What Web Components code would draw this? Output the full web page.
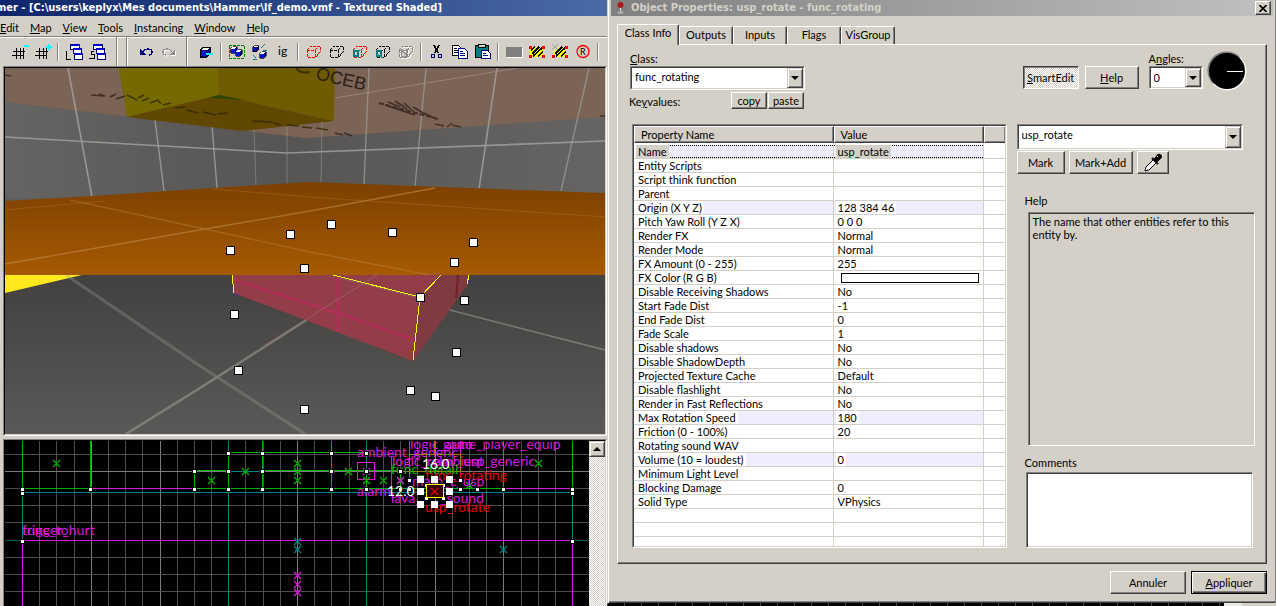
<!DOCTYPE html>
<html lang="en">
<head>
<meta charset="utf-8">
<title>Hammer - Object Properties</title>
<style>
html,body{margin:0;height:100%}
body{background:#000;color:#000;font:11px/14px Lato,"Open Sans",sans-serif;--face:#d4d0c8;--title:bold 11px/16px "DejaVu Sans Condensed","Noto Sans",sans-serif}
</style>
</head>
<body>
<hm-app></hm-app>
<script>
const def=(name,html,after)=>{
  const t=document.createElement('template');
  t.innerHTML='<style>*{box-sizing:border-box}</style>'+html;
  customElements.define(name,class extends HTMLElement{
    connectedCallback(){
      if(this.shadowRoot)return;
      this.attachShadow({mode:'open'}).append(t.content.cloneNode(true));
      if(after)after(this,this.shadowRoot);
    }
  });
};

/* ---------- toolbar icons ---------- */
const hash='<path d="M2 8h12M1 12h12M5 5v11M9 5v11M12 5v11" stroke="#000" fill="none"/>';
const casc=(c)=>`<path d="M5 1h9v5H5zM8 5h8v5H8zM9 10h8v6H9z" fill="#fff" stroke="#000080"/><path d="M5 1h9v2H5zM8 5h8v2H8zM9 10h8v2H9z" fill="#0000c8"/><path d="${c}" stroke="#000" fill="none"/>`;
const cube=(x,y,s)=>`<g transform="translate(${x} ${y}) scale(${s})"><path d="M1 4L4 1h7v7l-3 3H1z" fill="#000080" stroke="#000"/><path d="M2 4l2-2h6L8 4z" fill="#fff"/><path d="M2 5h5v5H2z" fill="#0018c8"/></g>`;
const wire=(c)=>`<path d="M2 7l4-4h9v6l-4 5H2zM2 7h8M10 7v7M10 7l4-4" fill="none" stroke="${c}" stroke-dasharray="3 1"/>`;
const Q='<path d="M3 8h4v5H3z" fill="#d4d0c8" stroke="#008080" stroke-width="1.500"/><path d="M6 12l2 3" stroke="#008080" stroke-width="1.500"/>';
const lock='<path d="M2 4h13v10H2z" fill="#ff0"/><path d="M3 7l4-3M4 11l7-7M5 13l9-8M10 13l5-4" stroke="#000" stroke-width="1.600"/><path d="M1 3h3v3H1zM14 3h3v3h-3zM1 12h3v3H1zM14 12h3v3h-3z" fill="#f00"/>';
const ICONS={
  snap:'<path d="M6 6h6M4 10h8M2 14h10" stroke="#000"/>',
  gridMinus:hash+'<path d="M13 3h5" stroke="#0ff" stroke-width="2"/>',
  gridPlus:hash+'<path d="M12 4h6M15 1v6" stroke="#0ff" stroke-width="2"/>',
  loadWin:casc('M1 8v8h5'),
  saveWin:casc('M6 8H3v3h3v4H1'),
  undo:'<path d="M3 6v6h6z" fill="#000080"/><path d="M6 9q2-3 5-3 4 0 4 3 0 3-3 3" fill="none" stroke="#000080" stroke-width="1.300"/>',
  redo:'<g transform="translate(1 1)"><path d="M15 6v6H9z" fill="#fff"/><path d="M12 9q-2-3-5-3-4 0-4 3 0 3 3 3" fill="none" stroke="#fff" stroke-width="1.300"/></g><path d="M15 6v6H9z" fill="#909090"/><path d="M12 9q-2-3-5-3-4 0-4 3 0 3 3 3" fill="none" stroke="#909090" stroke-width="1.300"/>',
  carve:cube(2,3,1)+'<path d="M9 11h7" stroke="#0ff" stroke-width="2"/>',
  group:'<path d="M1 2h15v13H1z" fill="none" stroke="#008000" stroke-dasharray="3 1"/>'+cube(2,3,.65)+cube(7,6,.65),
  ungroup:cube(1,2,.6)+cube(8,8,.65)+'<path d="M10 5l4-4M12 7h4M2 12l3 3M2 16h4" stroke="#008080"/>',
  ig:'<text x="4" y="12" font-size="12">ig</text>',
  hideSel:wire('#f00'),hideUn:wire('#000'),
  qSel:wire('#f00')+Q,qUn:wire('#000')+Q,
  qOff:'<g transform="translate(1 1)">'+wire('#fff')+'</g>'+wire('#808080')+'<path d="M4 7h5v6H4zM2 10l10-4M3 5l8 9" fill="none" stroke="#909090"/>',
  cut:'<path d="M6 2l4 8M11 2l-4 8" stroke="#000" stroke-width="1.500"/><circle cx="5" cy="13" r="2" fill="none" stroke="#000080"/><circle cx="12" cy="13" r="2" fill="none" stroke="#000080"/>',
  copy:'<path d="M1 2h6l3 3v7H1z" fill="#fff" stroke="#000"/><path d="M3 5h3M3 7h5M3 9h5" stroke="#000"/><path d="M7 5h6l3 3v7H7z" fill="#fff" stroke="#000080"/><path d="M9 8h3M9 10h5M9 12h5" stroke="#000080"/>',
  paste:'<path d="M1 2h13v12H1z" fill="#008080" stroke="#000"/><path d="M4 1h7v3H4z" fill="#d4d0c8" stroke="#000"/><path d="M7 7h6l3 3v5H7z" fill="#fff" stroke="#000080"/><path d="M9 10h3M9 12h5" stroke="#000080"/>',
  flat:'<path d="M2 5h16v10H2z" fill="#fff"/><path d="M1 4h16v10H1z" fill="#808080"/>',
  texLock:lock,
  texScale:lock+'<path d="M1 1l6 6M7 1L1 7M4 0v8M0 4h8" stroke="#d4d0c8" stroke-width="2"/><path d="M1 1l6 6M7 1L1 7" stroke="#a0a0a0"/>',
  radius:'<circle cx="9" cy="8.500" r="6" fill="none" stroke="#f00" stroke-width="1.300" shape-rendering="auto"/><text x="6" y="12" font-size="9">R</text>',
  clip:'<path d="M6 3H3v12h3" fill="none" stroke="#000" stroke-width="2"/>'
};
def('hm-icon',`<style>:host{display:block;flex:none;width:23px;height:23px}
button{display:flex;align-items:center;justify-content:center;width:100%;height:100%;padding:0;border:0;background:none}
svg{display:block;width:18px;height:17px;font-family:Lato,sans-serif}</style><button type="button"></button>`,(el,r)=>{
  const n=el.getAttribute('name'),b=r.querySelector('button');
  b.setAttribute('aria-label',n);
  b.innerHTML=`<svg viewBox="0 0 18 17" shape-rendering="crispEdges">${ICONS[n]}</svg>`;
});
def('hm-toolbar',`<style>:host{display:flex;align-items:center;height:30px;border-top:1px solid #808080;box-shadow:inset 0 1px #fff;overflow:hidden}
i{flex:none;width:2px;height:18px;margin:0 3px;border-left:1px solid #808080;border-right:1px solid #fff}
b{flex:none;width:2px;height:30px;margin:0 6px;border-left:1px solid #808080;border-right:1px solid #fff}
.e{margin:0 2px 0 8px}.first{flex:none;display:flex;justify-content:flex-end;width:8px;overflow:hidden}</style>
<div class="first"><hm-icon name="snap"></hm-icon></div><hm-icon name="gridMinus"></hm-icon><hm-icon name="gridPlus"></hm-icon><i></i><hm-icon name="loadWin"></hm-icon><hm-icon name="saveWin"></hm-icon><b class="e"></b><b></b><hm-icon name="undo"></hm-icon><hm-icon name="redo"></hm-icon><b></b><hm-icon name="carve"></hm-icon><i></i><hm-icon name="group"></hm-icon><hm-icon name="ungroup"></hm-icon><hm-icon name="ig"></hm-icon><i></i><hm-icon name="hideSel"></hm-icon><hm-icon name="hideUn"></hm-icon><hm-icon name="qSel"></hm-icon><hm-icon name="qUn"></hm-icon><hm-icon name="qOff"></hm-icon><i></i><hm-icon name="cut"></hm-icon><hm-icon name="copy"></hm-icon><hm-icon name="paste"></hm-icon><i></i><hm-icon name="flat"></hm-icon><hm-icon name="texLock"></hm-icon><hm-icon name="texScale"></hm-icon><hm-icon name="radius"></hm-icon><i></i><hm-icon name="clip"></hm-icon>`);

def('hm-menu',`<style>:host{display:flex;gap:11px;height:20px;align-items:center;font-size:11px;line-height:16px;padding-top:4px;overflow:hidden}
a{color:#000;text-decoration:none;white-space:nowrap}</style>
<a href="#"><u>E</u>dit</a><a href="#"><u>M</u>ap</a><a href="#"><u>V</u>iew</a><a href="#"><u>T</u>ools</a><a href="#"><u>I</u>nstancing</a><a href="#"><u>W</u>indow</a><a href="#"><u>H</u>elp</a>`);

/* ---------- 3D viewport ---------- */
const knobs=[[331,224],[392,232],[473,242],[454,262],[290,234],[230,250],[304,268],[420,297],[464,300],[234,314],[238,370],[456,352],[410,390],[435,396],[304,409]]
  .map(([x,y])=>`<path d="M${x-4} ${y-4}h9v9h-9z" fill="#000"/><path d="M${x-3} ${y-3}h7v7h-7z" fill="#fff"/>`).join('');
def('hm-camera',`<style>:host{display:block;min-height:0;overflow:hidden;background:#5f5e5d}svg{display:block;width:100%;height:100%}</style>
<svg viewBox="5 68 600 366" preserveAspectRatio="xMinYMin slice">
<defs>
<linearGradient id="o" x2="0" y2="1"><stop stop-color="#7c4000"/><stop offset="1" stop-color="#a65a02"/></linearGradient>
<linearGradient id="f" x2="0" y2="1"><stop stop-color="#424140"/><stop offset="1" stop-color="#5a5957"/></linearGradient>
<linearGradient id="w"><stop stop-color="#646462"/><stop offset=".47" stop-color="#565554"/><stop offset="1" stop-color="#666564"/></linearGradient>
</defs>
<path d="M5 68h600v130H5z" fill="url(#w)"/>
<path d="M5 68h600v49L305 138 5 102z" fill="#7b6355"/>
<g fill="none" stroke="#a4a4a2" stroke-opacity=".8">
<path d="M68 68l24 129M5 137l282 16 318-12" stroke-width="1.6"/>
<path d="M155 120l9 71M212 126l5 62" stroke-width="1.4"/><path d="M254 130l2 56M287 127v57M322 122l-1 61" opacity=".6"/><path d="M369 68l-5 116M426 68l-11 118M589 68l-28 123" stroke-width="1.4" opacity=".8"/><path d="M497 68l-18 121" stroke-width="1.6"/>
<path d="M335 98l183-30" stroke="#a08c80"/>
</g>
<path d="M119 68h99l1 27-92 22z" fill="#756900"/><path d="M218 68h117l-1 53-115-26z" fill="#6f5b00"/><path d="M127 117l92-22 115 26-92 10z" fill="#604800"/>
<path d="M209 98l10-3 16 3 9 2z" fill="#2f4700"/>
<g fill="none" stroke="#2e1f18" stroke-width="1.6" opacity=".75"><path d="M91 95l14 1-6-2M110 97l6-3M116 99l9-3" /><path d="M379 103l59 16" stroke-width="2" stroke-dasharray="5 2"/><path d="M388 102l12 5M395 101l12 8M404 103l10 9M413 107l12 7M424 113l12 6M385 105l30 10M435 124l9 2M447 127l5-4M452 125l9 2"/><path d="M5 75l6 1M335 133l8 2M344 133l8 3M600 116h5"/></g>
<text x="315" y="79" font-size="18" font-family="Liberation Sans" fill="#2c2018" transform="rotate(13 315 79)">OCEB</text>
<g fill="none" stroke="#2e2600" opacity=".75"><path d="M127 95l10 5M138 98l6-3M142 101l7-3M150 103l8-3 3 4M163 105l8-2M175 108l10-1M186 110l12 3M203 112l13 3M218 114l10-1" stroke-width="1.6"/><path d="M252 121l20 1M273 123l8 2M287 125l12 1M302 127l10 1M316 128l12 2" stroke-width="1.6"/><path d="M296 68q4 6 14 4" stroke-width="2"/></g>
<path d="M5 201l87-5 121-8 97-6 295 11v82H5z" fill="url(#o)"/>
<g fill="none" stroke="#c08a4a" opacity=".6"><path d="M5 264l200-35 105-18 125-23" stroke-width="1.4"/><path d="M70 200l135 29 105 23 120 23" stroke-width="1.6" opacity=".6"/><path d="M213 189l97 8 295 20M5 210l100-9" opacity=".5"/></g>
<path d="M5 275h600v159H5z" fill="url(#f)"/>
<path d="M5 275h77L5 293z" fill="#ffe81c"/>
<g fill="none" stroke="#a0a09c" opacity=".55"><path d="M377 275L200 388l-74 46" stroke-width="2.6"/><path d="M66 275l134 91 105 68" stroke-width="3" opacity=".6"/><path d="M318 276l182 47 105 27" stroke-width="1.6"/></g>
<path d="M232 275h237l-2 10-54 76-179-68z" fill="#933d48"/><path d="M441 275h28l-2 10-54 76 7-64z" fill="#803a42"/>
<g fill="none"><path d="M234 280l104 33 77 27M338 277v54" stroke="#ac3058" stroke-width="3"/><path d="M340 278l80 20M377 275l-112 70" stroke="#a07078" opacity=".6"/><path d="M458 275l-2 23" stroke="#70202c" stroke-width="2"/></g>
<path d="M232 275l2 18M333 275l87 22 21-22M420 297l-7 63M469 275l-2 9" fill="none" stroke="#ff0" shape-rendering="crispEdges"/>
<g shape-rendering="crispEdges">${knobs}</g>
</svg>`);

/* ---------- 2D viewport ---------- */
const gx=[...Array(33)].map((_,k)=>[Math.round(22+17.19*k)+.5,k%4==0]);
const gy=[[454.5],[471.5,1],[488.5],[505.5],[522.5],[540.5,1],[557.5],[574.5],[591.5]];
const grid=gx.map(([x,l])=>`<path d="M${x} 441v165" stroke="${l?'#7c7c7c':'#4c4c4c'}"/>`).join('')+gy.map(([y,l])=>`<path d="M5 ${y}h584" stroke="${l?'#7c7c7c':'#4c4c4c'}"/>`).join('');
const cross=(c,l)=>`<path fill="none" stroke="${c}" stroke-width="1.300" shape-rendering="auto" d="${l.map(([x,y])=>`M${x-3} ${y-3}l7 7M${x+4} ${y-3}l-7 7`).join('')}"/>`;
const dots=[[22,489],[22,493],[22,541],[90,489],[194,471],[194,489],[228,453],[228,471],[228,489],[262,453],[262,471],[262,489],[331,453],[331,471],[331,489],[366,453],[366,471],[366,489],[400,471],[400,489],[409,480],[409,489],[460,480],[460,489],[477,489],[503,489],[572,489],[572,493],[572,541],[426,485],[443,485],[426,498],[443,498]]
  .map(([x,y])=>`<path d="M${x-2} ${y-2}h5v5h-5z" fill="#000"/><path d="M${x-1} ${y-1}h3v3h-3z" fill="#fff"/>`).join('');
const grips=[[420,479],[434,479],[449,479],[420,491],[449,491],[420,504],[434,504],[449,504]].map(([x,y])=>`<path d="M${x-3} ${y-3}h7v7h-7z" fill="#fff"/>`).join('');
const T=(x,y,c,s)=>`<text x="${x}" y="${y}" fill="${c}">${s}</text>`;
const M='#dc18dc',G='#00b400',R='#e60000';
def('hm-ortho',`<style>:host{display:flex;min-height:0;background:#000}svg{display:block;flex:1;min-width:0;height:100%;font:14px Lato,sans-serif}
.bar{flex:none;width:16px;background:repeating-conic-gradient(#fff 0 25%,#d4d0c8 0 50%) 0 0/2px 2px}
button{display:flex;align-items:center;justify-content:center;width:16px;height:16px;padding:0;background:#d4d0c8;border:1px solid;border-color:#d4d0c8 #404040 #404040 #d4d0c8;box-shadow:inset 1px 1px #fff,inset -1px -1px #808080}
i{border:4px solid transparent;border-top:0;border-bottom:4px solid #000}</style>
<svg viewBox="5 441 584 165" preserveAspectRatio="xMinYMin slice"><g shape-rendering="crispEdges">${grid}
<path d="M228.500 441v165M366.500 441v165M22.500 489v52M572.500 489v52M22 492.500h550M228 471.500h34" stroke="#008484" fill="none"/><path d="M5 540.500h17M573 540.500h16" stroke="#005c5c"/>
<path d="M22.500 441v48M90.500 441v48M22 488.500h68M194 488.500h310M194.500 471v18M194 470.500h34M228 452.500h138M228.500 453v36M262.500 441v48M331.500 441v48M262 470.500h138M366.500 471v18M503.500 441v48M572.500 441v48M400.500 471v18" stroke="${G}" fill="none"/>
<path d="M90 488.500h104M504 488.500h68M22 540.500h550M22.500 541v65M572.500 541v65M391.500 456v33M409.500 441v40M460.500 441v40M357.500 462.500h17v17h-17z" stroke="${M}" fill="none"/>
<path d="M409.500 454.500h51v17h-51zM434.500 441v14M426.500 454v17" stroke="#8c8c00" fill="none"/>
${cross(G,[[56,463],[211,480],[245,471],[297,463],[297,471],[297,480],[348,471],[383,480],[400,480],[469,485],[538,463],[366,480]])}${cross('#008484',[[297,541],[297,549],[503,549]])}${cross(M,[[297,575],[297,584],[297,592],[366,471],[400,480]])}</g>
${T(22,535,M,'trigger_hurt')}${T(22,535,M,'func_to')}${T(410,449,M,'logic_auto')}${T(443,449,M,'game_player_equip')}${T(357,457,M,'ambient_generic')}${T(392,466,M,'logic_relay_usp')}${T(434,466,M,'ambient_generic')}${T(391,474,G,'func_detail')}${T(425,480,R,'func_rotating')}${T(412,486,M,'math_c_usp')}${T(357,496,M,'alarm_')}${T(391,503,M,'lava_')}${T(440,503,M,'_sound')}${T(425,512,R,'usp_rotate')}
<g shape-rendering="crispEdges">${dots}<path d="M426.500 484.500h17v13h-17z" fill="#300" stroke="#ff0"/>${cross(R,[[434,491]])}${grips}</g>
${T(422,469,'#fff','16.0')}${T(387,496,'#fff','12.0')}
</svg><div class="bar"><button type="button" aria-label="scroll up"><i></i></button></div>`);

def('hm-editor',`<style>:host{display:flex;flex-direction:column;min-width:0;background:var(--face);overflow:hidden}
h1{margin:0;height:16px;font:var(--title);color:#fff;white-space:nowrap;overflow:hidden;background:linear-gradient(to right,#0e266b,#4a6aa6);text-indent:-4px}
.views{flex:1;min-height:0;display:grid;grid-template-rows:minmax(0,370fr) minmax(0,167fr);gap:3px;padding-left:3px}
.v{display:grid;border:1px solid;border-color:#808080 #fff #fff #808080;min-height:0}
.v>*{border:1px solid;border-color:#000 #d4d0c8 #d4d0c8 #000}
.v.cut,.v.cut>*{border-bottom:0}</style>
<h1>mer - [C:\\users\\keplyx\\Mes documents\\Hammer\\lf_demo.vmf - Textured Shaded]</h1>
<hm-menu></hm-menu><hm-toolbar></hm-toolbar>
<div class="views"><div class="v"><hm-camera></hm-camera></div><div class="v cut"><hm-ortho></hm-ortho></div></div>`);

/* ---------- dialog controls ---------- */
def('hm-button',`<style>:host{display:block;flex:none;height:23px}
button{display:flex;align-items:center;justify-content:center;width:100%;height:100%;padding:0;font:inherit;color:#000;background:var(--face);border:1px solid;border-color:#fff #404040 #404040 #fff;box-shadow:inset -1px -1px #808080}
:host([pressed]) button{border-color:#404040 #fff #fff #404040;box-shadow:inset 1px 1px #808080;background:repeating-conic-gradient(#fff 0 25%,#d4d0c8 0 50%) 0 0/2px 2px}
:host([default]) button{border-color:#000;box-shadow:inset 1px 1px #fff,inset -1px -1px #404040,inset -2px -2px #808080}
</style><button type="button"><slot></slot></button>`);
def('hm-combo',`<style>:host{display:block}label{display:block;line-height:15px}label:empty{display:none}
.box{position:relative;height:var(--h,23px);border:1px solid;border-color:#808080 #fff #fff #808080}
select{appearance:none;display:block;width:100%;height:100%;margin:0;padding:0 18px var(--lift,0) 3px;border:1px solid;border-color:#404040 #d4d0c8 #d4d0c8 #404040;border-radius:0;background:#fff;color:#000;font:inherit;outline:0}
span{position:absolute;top:1px;bottom:1px;right:1px;width:16px;display:flex;align-items:center;justify-content:center;background:var(--face);border:1px solid;border-color:#d4d0c8 #404040 #404040 #d4d0c8;box-shadow:inset 1px 1px #fff,inset -1px -1px #808080;pointer-events:none}
i{border:4px solid transparent;border-bottom:0;border-top-color:#000}</style>
<label for="s"></label><div class="box"><select id="s"><option></option></select><span><i></i></span></div>`,(el,r)=>{
  r.querySelector('label').innerHTML=el.getAttribute('label')||'';
  r.querySelector('option').textContent=el.getAttribute('value');
  if(!el.hasAttribute('label'))r.querySelector('select').setAttribute('aria-label','Value');
});
def('hm-tabs',`<style>:host{display:flex;align-items:flex-end;height:21px}
button{flex:none;width:54px;height:18px;padding:0 0 1px;font:inherit;line-height:16px;color:#000;background:var(--face);border:1px solid;border-color:#fff #404040 transparent #fff;border-bottom:0;border-radius:2px 2px 0 0;box-shadow:inset -1px 0 #808080}
button.on{width:62px;height:21px;margin:0 0 -1px;padding-bottom:4px;z-index:1}</style>
<button type="button" class="on">Class Info</button><button type="button">Outputs</button><button type="button">Inputs</button><button type="button">Flags</button><button type="button">VisGroup</button>`);

const rows=[['Name','usp_rotate','sel'],['Entity Scripts',''],['Script think function',''],['Parent',''],['Origin (X Y Z)','128 384 46','hl'],['Pitch Yaw Roll (Y Z X)','0 0 0'],['Render FX','Normal'],['Render Mode','Normal'],['FX Amount (0 - 255)','255'],['FX Color (R G B)','','sw'],['Disable Receiving Shadows','No'],['Start Fade Dist','-1'],['End Fade Dist','0'],['Fade Scale','1'],['Disable shadows','No'],['Disable ShadowDepth','No'],['Projected Texture Cache','Default'],['Disable flashlight','No'],['Render in Fast Reflections','No'],['Max Rotation Speed','180','hl'],['Friction (0 - 100%)','20'],['Rotating sound WAV',''],['Volume (10 = loudest)','0','hl'],['Minimum Light Level',''],['Blocking Damage','0'],['Solid Type','VPhysics'],['',''],['',''],['','','last']];
def('hm-props',`<style>:host{display:block;border:1px solid;border-color:#808080 #fff #fff #808080}
table{width:100%;border-collapse:separate;border-spacing:0;table-layout:fixed;background:#fff;border:1px solid;border-color:#404040 #d4d0c8 #d4d0c8 #404040}
.b{width:150px}.c{width:21px}
th{height:17px;padding:0 0 0 6px;text-align:left;font-weight:normal;line-height:15px;background:var(--face);border:1px solid;border-color:#fff #404040 #404040 #fff;box-shadow:inset -1px -1px #808080}
th:last-child{border-right:0}
td{height:14px;padding:0 0 0 2px;line-height:13px;white-space:nowrap;border-bottom:1px solid var(--face);border-right:1px solid var(--face)}
td:last-child{border-right:0}
td span{display:inline-block;height:13px;padding:0 2px;vertical-align:top}
.hl td:not(:last-child),.sel td:not(:last-child){background:#eef}
.hl td:first-child,.sel td:first-child{box-shadow:inset 2px 0 #fff}
.hl span{background:#fff}.sel span{background:var(--face)}
.sel td:not(:last-child){background-image:linear-gradient(90deg,#000 50%,transparent 0),linear-gradient(90deg,#000 50%,transparent 0);background-size:2px 1px;background-position:0 0,0 100%;background-repeat:repeat-x}
.gap td{height:2px;padding:0;border-bottom:0}
.last td{height:9px;border-bottom:0}
.sw b{display:block;height:10px;margin:1px 4px 0 5px;border:1px solid #000;background:#fff}</style>
<table><colgroup><col><col class="b"><col class="c"></colgroup><thead><tr><th>Property Name</th><th>Value</th><th></th></tr></thead>
<tbody><tr class="gap"><td></td><td></td><td></td></tr>${rows.map(([a,b,c])=>`<tr class="${c||''}"><td>${a?`<span>${a}</span>`:''}</td><td>${c=='sw'?'<b></b>':b?`<span>${b}</span>`:''}</td><td></td></tr>`).join('')}</tbody></table>`);

def('hm-dialog',`<style>:host{display:flex;flex-direction:column;min-width:0;background:var(--face);border:solid #808080;border-width:0 1px 0 0;box-shadow:inset 1px 0 var(--face),inset 2px 0 #fff,inset 0 -1px #404040,inset 0 -2px #808080;padding:0 2px 0 4px}
header{display:flex;align-items:center;height:16px;background:linear-gradient(to right,#808080,#c0c0c0);padding:0 2px 0 6px;gap:7px}
h2{flex:1;min-width:0;margin:0;font:var(--title);color:var(--face);white-space:nowrap;overflow:hidden}
header svg{flex:none;width:7px;height:14px}
.x{flex:none;display:flex;align-items:center;justify-content:center;width:16px;height:14px;padding:0;background:var(--face);border:1px solid;border-color:#fff #404040 #404040 #fff;box-shadow:inset -1px -1px #808080}
.x svg{width:8px;height:7px}
.body{flex:1;display:flex;flex-direction:column;padding:7px 6px 9px 6px}
.page{flex:1;display:grid;grid-template-columns:minmax(0,377fr) minmax(0,238fr);gap:0 10px;padding:6px 11px 15px 11px;border:1px solid;border-color:#fff #404040 #404040 #fff;box-shadow:inset -1px -1px #808080}
.left,.right{display:flex;flex-direction:column;min-width:0}
.top{height:73px;flex:none}
.cls{width:175px;margin-left:1px;--h:24px;--lift:2px}.kv{display:flex;align-items:flex-start;width:175px;padding-top:2px;gap:1px}.kv span{flex:1;padding-top:3px}.kv hm-button{width:36px;height:17px}
hm-props{margin-left:3px}
.smart{display:flex;align-items:flex-start;padding:0 8px 0 6px;gap:6px}
.smart hm-button{margin-top:15px}.smart .ang{width:56px;margin-left:4px;--h:23px}
.dial{flex:none;width:40px;height:40px;margin-left:-2px}
.name{margin-right:12px;--h:26px;--lift:5px}
.btns{display:flex;gap:4px;padding-top:1px}
.help{flex:1;margin:4px 0 10px 11px;padding:2px 4px;line-height:13px;border:1px solid;border-color:#808080 #fff #fff #808080;box-shadow:inset 1px 1px #404040}
.cap{margin:20px 0 0 8px}
label.cap{margin-top:0}
textarea{display:block;margin:2px 2px 0 9px;height:76px;resize:none;background:#fff;border:1px solid;border-color:#808080 #fff #fff #808080;border-radius:0;box-shadow:inset 1px 1px #404040,inset -1px -1px #d4d0c8;padding:2px;font:inherit}
footer{display:flex;justify-content:flex-end;align-items:center;gap:5px;padding-top:7px}</style>
<header><svg viewBox="0 0 7 14"><circle cx="3.500" cy="4" r="3" fill="#b01820"/><path d="M3 7h1v4H3z" fill="#ddd"/><ellipse cx="3.500" cy="11.500" rx="3" ry="1.500" fill="#aaa"/></svg><h2>Object Properties: usp_rotate - func_rotating</h2><button class="x" type="button" aria-label="Close"><svg viewBox="0 0 8 7"><path d="M.5 0l7 7M7.500 0l-7 7" stroke="#000" stroke-width="1.600"/></svg></button></header>
<div class="body"><hm-tabs></hm-tabs>
<div class="page"><div class="left"><div class="top"><hm-combo class="cls" label="&lt;u&gt;C&lt;/u&gt;lass:" value="func_rotating"></hm-combo>
<div class="kv"><span>Ke<u>y</u>values:</span><hm-button>copy</hm-button><hm-button>paste</hm-button></div></div><hm-props></hm-props></div>
<div class="right"><div class="top smart"><hm-button pressed style="width:56px"><u>S</u>martEdit</hm-button><hm-button style="width:54px"><u>H</u>elp</hm-button><hm-combo class="ang" label="A&lt;u&gt;n&lt;/u&gt;gles:" value="0"></hm-combo>
<svg class="dial" viewBox="0 0 40 40"><circle cx="20.500" cy="20.500" r="19" fill="#fff"/><path d="M6 33A19 19 0 0 1 33 6z" fill="#808080"/><circle cx="20" cy="20" r="18" fill="#000"/><path d="M20 20.500h16" stroke="#fff"/></svg></div>
<hm-combo class="name" value="usp_rotate"></hm-combo>
<div class="btns"><hm-button style="width:48px">Mark</hm-button><hm-button style="width:64px">Mark+Add</hm-button><hm-button style="width:32px"><svg width="20" height="20" viewBox="0 0 20 20"><path d="M2 18l1-4 8-8 3 3-8 8z" fill="#fff" stroke="#000"/><path d="M9 5l6 6M12 6l3-4q3-1 3 2l-4 4z" fill="#000" stroke="#000" stroke-width="2"/><path d="M14 4l1-1" stroke="#fff"/></svg></hm-button></div>
<div class="cap">Help</div><div class="help">The name that other entities refer to this entity by.</div>
<label class="cap" for="c">Comments</label><textarea id="c"></textarea></div></div>
<footer><hm-button style="width:76px">Annuler</hm-button><hm-button default style="width:76px"><u>A</u>ppliquer</hm-button></footer></div>`);

def('hm-app',`<style>:host{display:grid;grid-template-columns:minmax(0,607fr) minmax(0,669fr);grid-template-rows:100vh;min-height:100vh}
.r{display:grid;grid-template-rows:1fr 3px;min-width:0;min-height:0}
.strip{display:flex;height:3px;overflow:hidden;background:repeating-linear-gradient(to right,#4c4c4c 0 1px,#000 1px 17px)}
.strip i{margin-left:auto;width:18px;background:#e8e6e2}.strip b{width:34px;background:var(--face)}</style>
<hm-editor></hm-editor><div class="r"><hm-dialog></hm-dialog><div class="strip"><i></i><b></b></div></div>`);
</script>
</body>
</html>
